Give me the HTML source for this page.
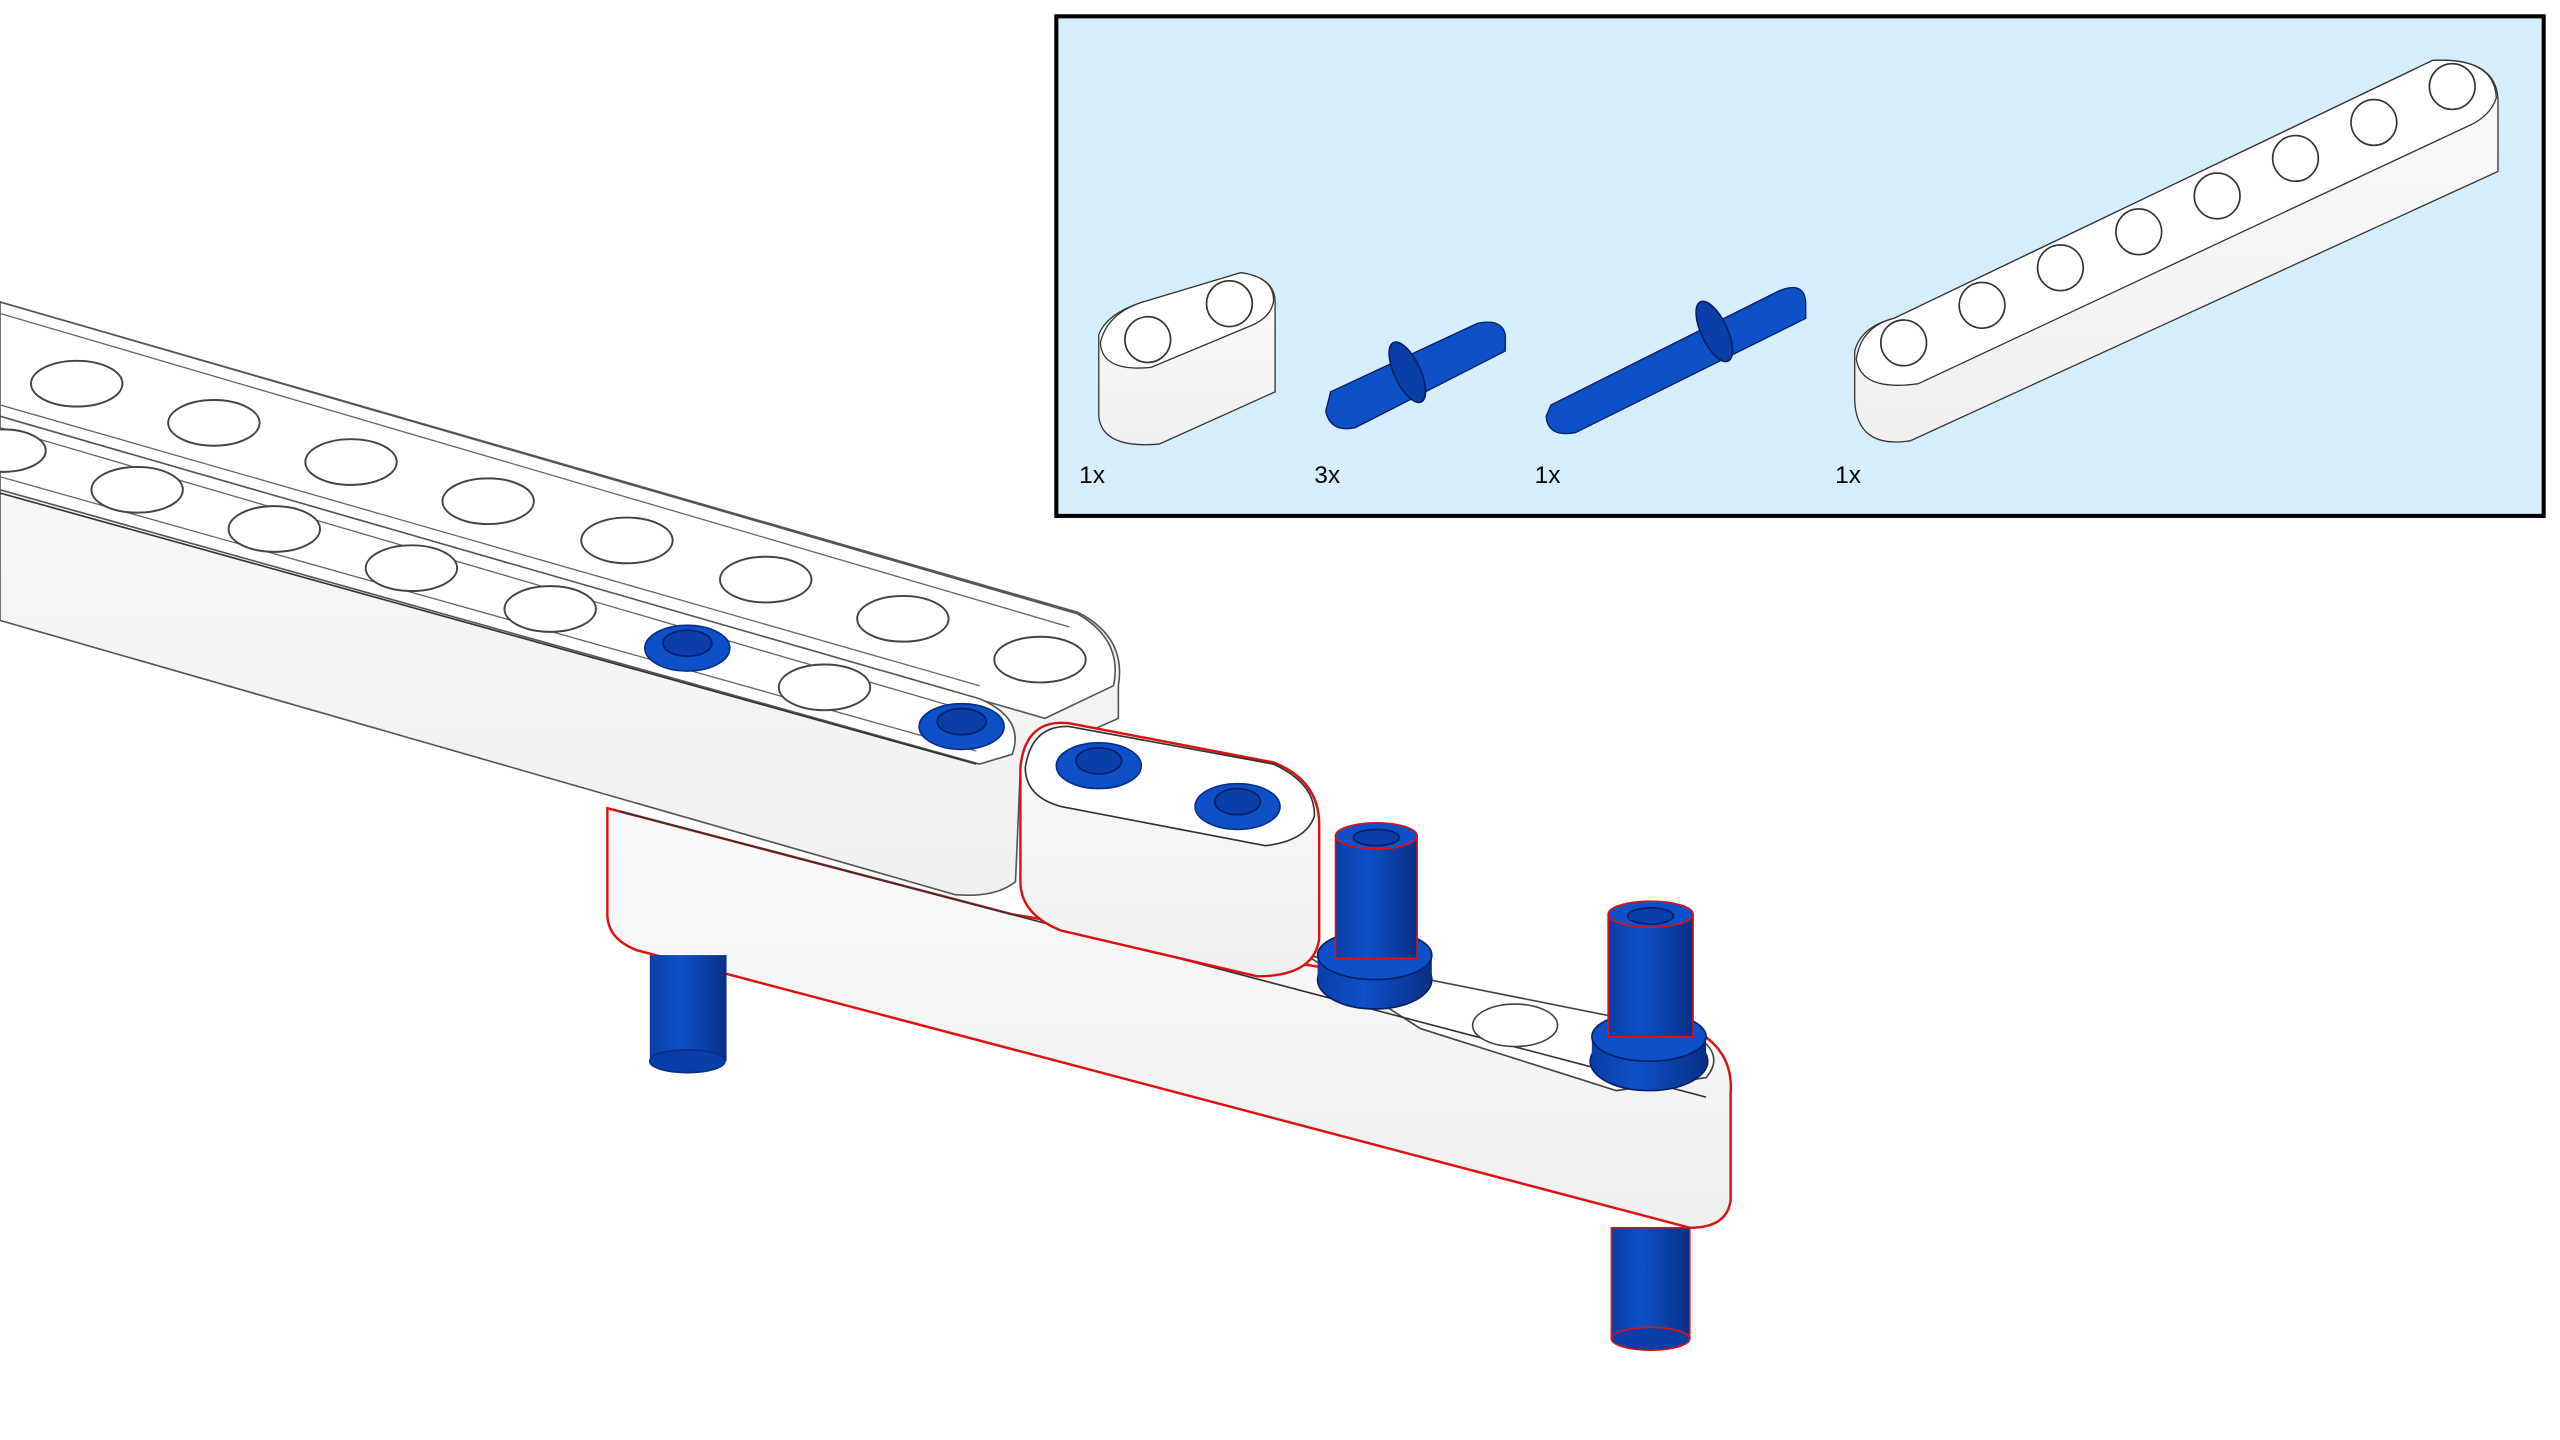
<!DOCTYPE html>
<html><head><style>
html,body{margin:0;padding:0;background:#fff;width:2560px;height:1440px;overflow:hidden}
svg{display:block}
text{font-family:"Liberation Sans",sans-serif;font-size:15px;fill:#000}
</style></head><body>
<svg width="2560" height="1440" viewBox="0 0 1568 882" preserveAspectRatio="none" xmlns="http://www.w3.org/2000/svg">
<defs>
<linearGradient id="side" x1="0" y1="0" x2="0" y2="1"><stop offset="0" stop-color="#fafafa"/><stop offset="1" stop-color="#f0f0f0"/></linearGradient>
<linearGradient id="blue" x1="0" y1="0" x2="1" y2="0"><stop offset="0" stop-color="#0a3ea8"/><stop offset="0.4" stop-color="#0d50c8"/><stop offset="1" stop-color="#082f85"/></linearGradient>
</defs>

<!-- lower red-outlined beam -->
<path d="M372,495 L620,560 L1040,632 Q1062,645 1060,670 L1060,735 Q1058,752 1035,752 L390,582 Q372,575 372,560 Z" fill="url(#side)" stroke="#e01010" stroke-width="1.5"/>
<path d="M800,585 L1035,632 Q1058,645 1045,660 L990,668 L870,630 Z" fill="#fff" stroke="#444" stroke-width="1"/>
<path d="M380,497 L1045,672" stroke="#333" stroke-width="1" fill="none"/>
<ellipse cx="928" cy="628" rx="26" ry="13" fill="#fff" stroke="#444"/>

<!-- pins under -->
<rect x="398" y="585" width="47" height="65" fill="url(#blue)"/>
<ellipse cx="421" cy="650" rx="23" ry="7" fill="#0a3ea8" stroke="#0a2f80"/>
<rect x="987" y="752" width="48" height="68" fill="url(#blue)" stroke="#e01010" stroke-width="1"/>
<ellipse cx="1011" cy="820" rx="24" ry="7" fill="#0a3ea8" stroke="#e01010"/>

<!-- big double beam -->
<path d="M0,185 L660,375 Q690,390 685,420 L685,440 L640,460 L625,470 L622,540 Q610,550 585,548 L0,380 Z" fill="url(#side)" stroke="#555" stroke-width="1"/>
<path d="M0,185 L660,376 Q688,392 682,420 L640,440 L0,255 Z" fill="#fff" stroke="#555" stroke-width="1"/>
<path d="M0,255 L600,428 Q628,440 620,462 L600,468 L0,300 Z" fill="#fff" stroke="#555" stroke-width="1"/>
<path d="M0,302 L598,468" stroke="#333" fill="none"/>
<path d="M0,192 L655,384 M0,248 L600,420 M0,262 L595,436 M0,292 L598,460" stroke="#666" stroke-width="0.8" fill="none"/>
<g fill="#fff" stroke="#444" stroke-width="1.2">
<ellipse cx="47" cy="235" rx="28" ry="14"/><ellipse cx="131" cy="259" rx="28" ry="14"/><ellipse cx="215" cy="283" rx="28" ry="14"/><ellipse cx="299" cy="307" rx="28" ry="14"/><ellipse cx="384" cy="331" rx="28" ry="14"/><ellipse cx="469" cy="355" rx="28" ry="14"/><ellipse cx="553" cy="379" rx="28" ry="14"/><ellipse cx="637" cy="404" rx="28" ry="14"/>
<ellipse cx="2" cy="276" rx="26" ry="13"/><ellipse cx="84" cy="300" rx="28" ry="14"/><ellipse cx="168" cy="324" rx="28" ry="14"/><ellipse cx="252" cy="348" rx="28" ry="14"/><ellipse cx="337" cy="373" rx="28" ry="14"/><ellipse cx="505" cy="421" rx="28" ry="14"/>
</g>
<ellipse cx="421" cy="397" rx="26" ry="14" fill="#0d50c8" stroke="#082f85"/><ellipse cx="421" cy="394" rx="15" ry="8" fill="#0a3ea8" stroke="#061f60"/>
<ellipse cx="589" cy="445" rx="26" ry="14" fill="#0d50c8" stroke="#082f85"/><ellipse cx="589" cy="442" rx="15" ry="8" fill="#0a3ea8" stroke="#061f60"/>

<!-- 2-hole beam -->
<path d="M655,443 L780,467 Q808,478 808,505 L808,575 Q805,598 770,598 L650,570 Q625,560 625,540 L625,470 Q628,440 655,443 Z" fill="url(#side)" stroke="#e01010" stroke-width="1.5"/>
<path d="M655,445 L780,468 Q806,480 805,500 Q800,515 775,518 L650,494 Q628,488 628,470 Q632,444 655,445 Z" fill="#fff" stroke="#333"/>
<ellipse cx="673" cy="469" rx="26" ry="14" fill="#0d50c8" stroke="#082f85"/><ellipse cx="673" cy="466" rx="14" ry="8" fill="#0a3ea8" stroke="#061f60"/>
<ellipse cx="758" cy="494" rx="26" ry="14" fill="#0d50c8" stroke="#082f85"/><ellipse cx="758" cy="491" rx="14" ry="8" fill="#0a3ea8" stroke="#061f60"/>

<!-- standing pins -->
<ellipse cx="842" cy="600" rx="35" ry="18" fill="url(#blue)" stroke="#061f60"/>
<rect x="807" y="585" width="70" height="15" fill="url(#blue)"/>
<ellipse cx="842" cy="585" rx="35" ry="15" fill="#0d50c8" stroke="#061f60"/>
<rect x="818" y="512" width="50" height="75" fill="url(#blue)" stroke="#e01010"/>
<ellipse cx="843" cy="512" rx="25" ry="8" fill="#0d50c8" stroke="#e01010"/>
<ellipse cx="843" cy="513" rx="14" ry="5" fill="#0a3ea8" stroke="#061f60"/>

<ellipse cx="1010" cy="650" rx="36" ry="18" fill="url(#blue)" stroke="#061f60"/>
<rect x="975" y="635" width="70" height="15" fill="url(#blue)"/>
<ellipse cx="1010" cy="635" rx="35" ry="15" fill="#0d50c8" stroke="#061f60"/>
<rect x="985" y="560" width="52" height="75" fill="url(#blue)" stroke="#e01010"/>
<ellipse cx="1011" cy="560" rx="26" ry="8" fill="#0d50c8" stroke="#e01010"/>
<ellipse cx="1011" cy="561" rx="14" ry="5" fill="#0a3ea8" stroke="#061f60"/>

<!-- panel -->
<rect x="647" y="10" width="911" height="306" fill="#d6eefc" stroke="#000" stroke-width="2.5"/>
<!-- small beam -->
<path d="M700,185 L760,167 Q781,170 781,185 L781,240 L710,272 Q675,275 673,255 L673,205 Q678,192 700,185 Z" fill="url(#side)" stroke="#333" stroke-width="0.8"/>
<path d="M700,185 L760,167 Q781,170 780,185 Q778,195 765,200 L705,225 Q675,228 674,210 Q678,192 700,185 Z" fill="#fff" stroke="#333" stroke-width="0.8"/>
<circle cx="703" cy="208" r="14" fill="#fff" stroke="#333"/><circle cx="753" cy="186" r="14" fill="#fff" stroke="#333"/>
<!-- pin 3x -->
<path d="M815,240 L905,198 Q920,195 922,205 L922,215 L830,262 Q815,265 812,252 Z" fill="#0d50c8" stroke="#061f60" stroke-width="0.8"/>
<ellipse cx="862" cy="228" rx="8" ry="20" fill="#0a3ea8" stroke="#061f60" transform="rotate(-25 862 228)"/>
<!-- pin long -->
<path d="M950,248 L1090,178 Q1105,172 1106,185 L1106,195 L965,265 Q948,268 947,255 Z" fill="#0d50c8" stroke="#061f60" stroke-width="0.8"/>
<ellipse cx="1050" cy="203" rx="8" ry="20" fill="#0a3ea8" stroke="#061f60" transform="rotate(-25 1050 203)"/>
<!-- long beam -->
<path d="M1160,195 L1490,37 Q1528,35 1530,60 L1530,105 L1170,270 Q1137,275 1136,245 L1136,215 Q1140,200 1160,195 Z" fill="url(#side)" stroke="#333" stroke-width="0.8"/>
<path d="M1160,195 L1490,37 Q1528,35 1529,60 Q1525,72 1510,78 L1175,235 Q1140,240 1137,220 Q1140,200 1160,195 Z" fill="#fff" stroke="#333" stroke-width="0.8"/>
<g fill="#fff" stroke="#333"><circle cx="1166" cy="210" r="14"/><circle cx="1214" cy="187" r="14"/><circle cx="1262" cy="164" r="14"/><circle cx="1310" cy="142" r="14"/><circle cx="1358" cy="120" r="14"/><circle cx="1406" cy="97" r="14"/><circle cx="1454" cy="75" r="14"/><circle cx="1502" cy="53" r="14"/></g>
<text x="661" y="296">1x</text><text x="805" y="296">3x</text><text x="940" y="296">1x</text><text x="1124" y="296">1x</text>
</svg>
</body></html>
